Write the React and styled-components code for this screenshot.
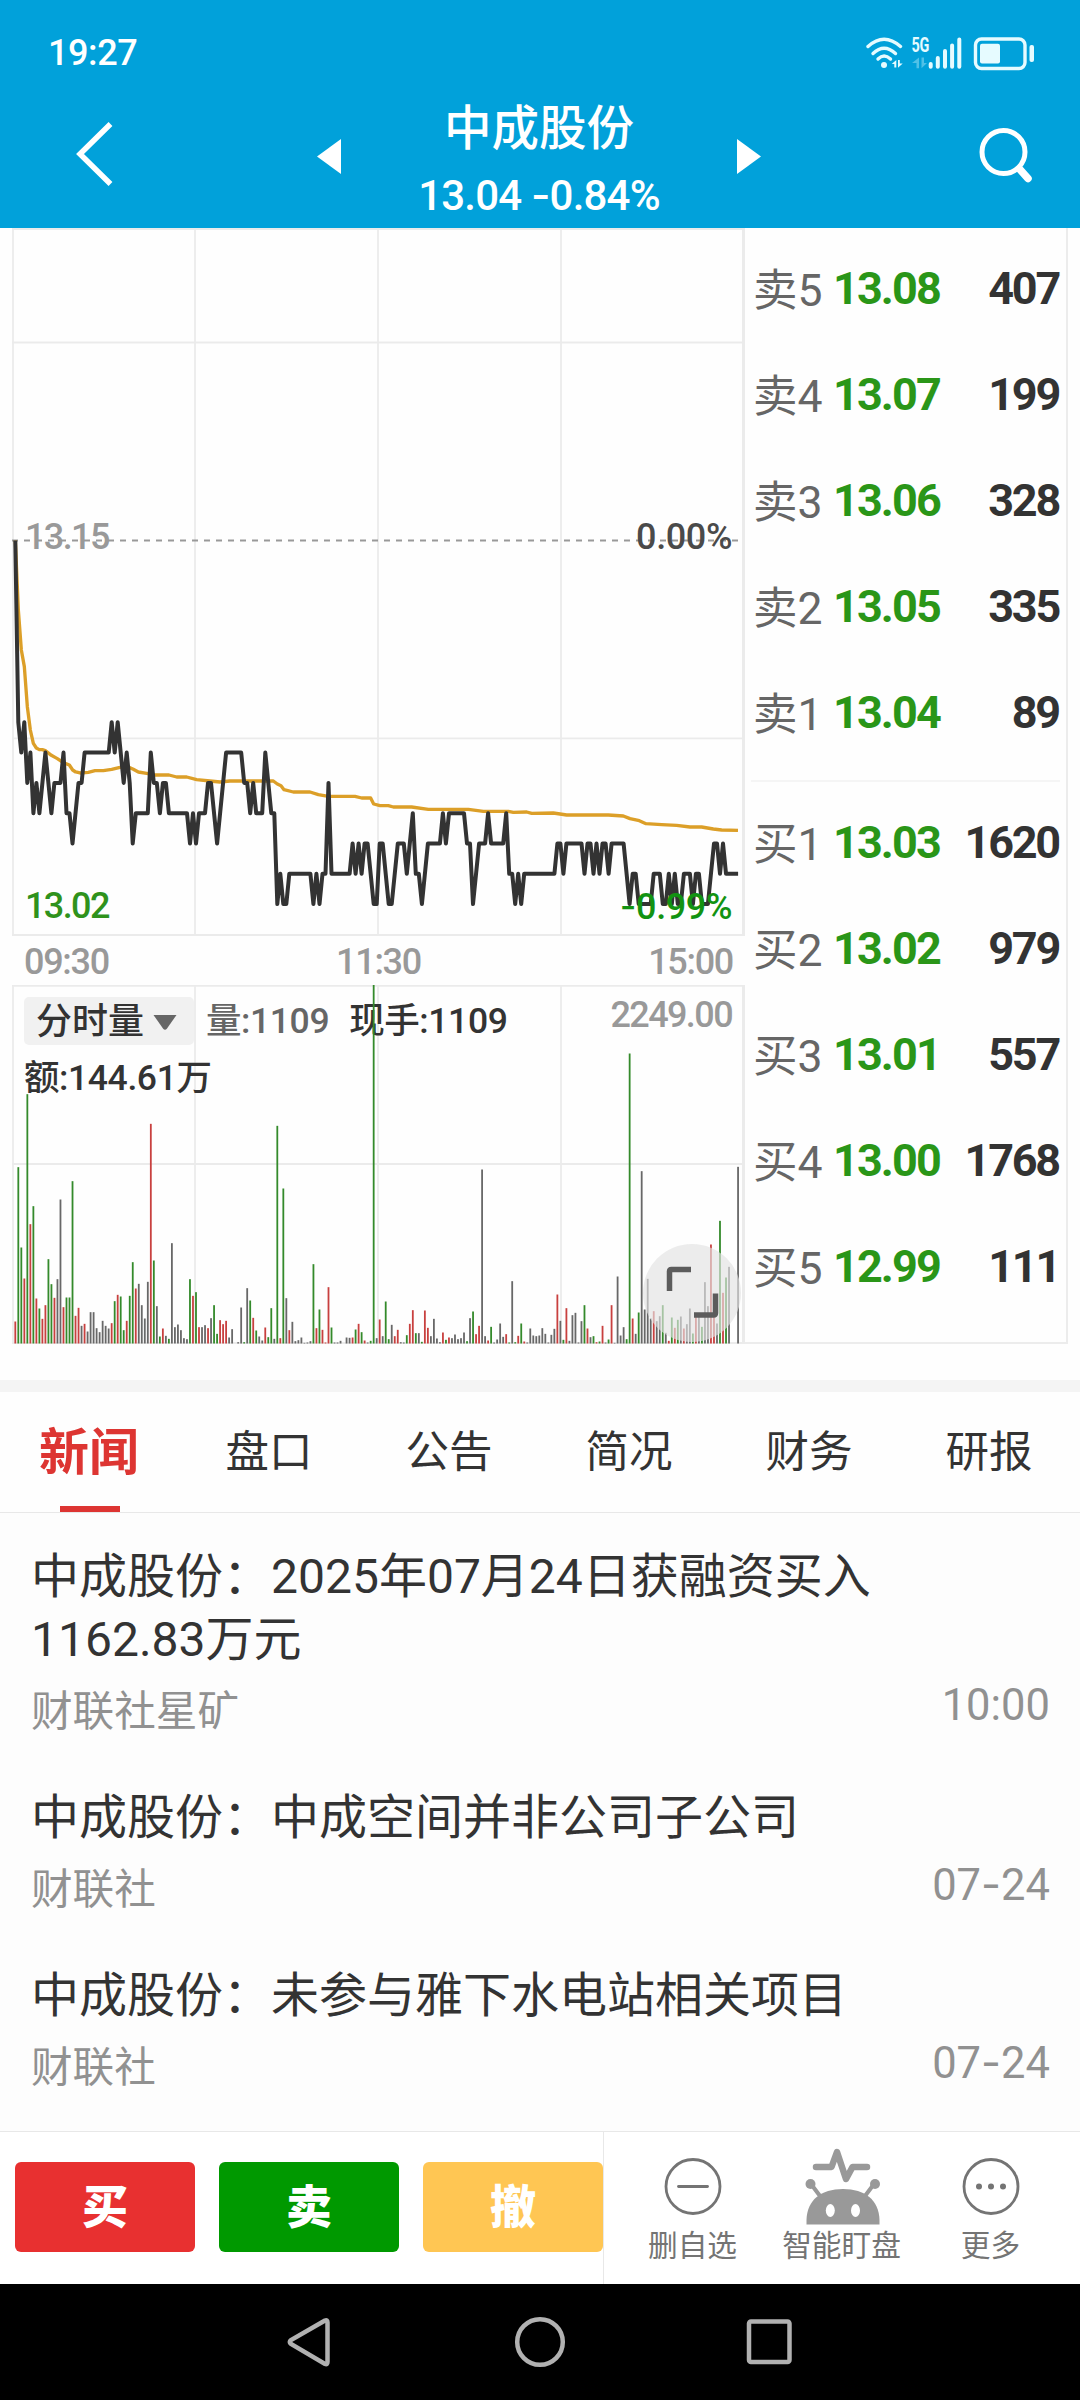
import React, { useState } from 'react';
import styled, { createGlobalStyle } from 'styled-components';

const GlobalStyle = createGlobalStyle`
  * {
    box-sizing: border-box;
  }
  body {
    margin: 0;
    background: #fefefe;
    color: #333;
    font-family: Roboto, 'Noto Sans CJK SC', sans-serif;
  }
  svg {
    display: block;
    flex: none;
  }
`;

const Screen = styled.div`
  display: flex;
  flex-direction: column;
  width: 1080px;
  height: 2400px;
  overflow: hidden;
`;

/* header */
const Header = styled.header`
  height: 228px;
  background: #01a1da;
  color: #fff;
`;

const StatusBar = styled.div`
  display: flex;
  align-items: center;
  justify-content: space-between;
  height: 94px;
  padding: 11px 40px 0 48px;
  font-size: 36px;
  font-weight: 500;
  letter-spacing: -0.4px;
`;

const TitleBar = styled.div`
  display: grid;
  grid-template-columns: 317px 444px 319px;
  align-items: center;
  height: 134px;
`;

const HeaderSide = styled.div`
  display: flex;
  justify-content: ${props => (props.$end ? 'flex-end' : 'flex-start')};
  padding: 0 47px 13px 75px;
`;

const Switcher = styled.div`
  display: flex;
  align-items: center;
  justify-content: space-between;
`;

const StockName = styled.div`
  text-align: center;
  h1 {
    margin: 0;
    padding-top: 1px;
    font-size: 47.5px;
    font-weight: 500;
    line-height: 66px;
  }
  p {
    margin: 0;
    font-size: 42px;
    font-weight: 500;
    line-height: 65px;
    letter-spacing: -0.8px;
  }
`;

/* chart + order book */
const Quote = styled.section`
  display: flex;
  height: 1116px;
`;

const Charts = styled.div`
  width: 745px;
`;

const ChartBox = styled.div`
  position: relative;
  height: ${props => props.$height}px;
`;

const ChartLabel = styled.span`
  position: absolute;
  top: ${props => props.$top}px;
  ${props => (props.$right ? 'right: 13px;' : 'left: 25px;')}
  color: ${props => props.$color};
  font-size: 36px;
  font-weight: 500;
  line-height: 42px;
  letter-spacing: ${props => (props.$percent ? -0.4 : -1.6)}px;
`;

const TimeAxis = styled.div`
  display: flex;
  align-items: center;
  justify-content: space-between;
  height: 47px;
  padding: 0 12px 0 24px;
  color: #999;
  font-size: 36px;
  font-weight: 500;
  letter-spacing: -1.3px;
`;

const Legend = styled.div`
  position: absolute;
  top: 11px;
  left: 24px;
  display: flex;
  flex-wrap: wrap;
  align-items: center;
  width: 520px;
  font-size: 35.5px;
  font-weight: 500;
  line-height: 50px;
  letter-spacing: -0.4px;
`;

const TypeSelect = styled.button`
  display: flex;
  align-items: center;
  justify-content: space-between;
  width: 170px;
  height: 48px;
  padding: 2px 16px 0 12px;
  border: 0;
  border-radius: 5px;
  background: #f1f1f1;
  color: #333;
  font: inherit;
  font-size: 36px;
`;

const LegendItem = styled.span`
  margin-left: ${props => props.$gap || 0}px;
  margin-top: ${props => props.$drop || 0}px;
  color: ${props => props.$color || '#333'};
`;

const ExpandButton = styled.button`
  position: absolute;
  right: 4px;
  bottom: 2px;
  width: 98px;
  height: 98px;
  padding: 0;
  border: 0;
  border-radius: 50%;
  background: rgba(226, 226, 226, 0.66);
`;

const BarLayer = styled.svg`
  position: absolute;
  top: 0;
  left: 0;
  pointer-events: none;
`;

const OrderBook = styled.div`
  width: 323px;
  padding: 7px 6px 0;
  border: solid #ececec;
  border-width: 0 2px 2px 0;
`;

const BookDivider = styled.div`
  height: 2px;
  margin: 15px 0 7px;
  background: #f5f5f5;
`;

const BookRow = styled.div`
  display: flex;
  align-items: center;
  height: 106px;
  padding: 0 1px 0 2px;
  font-size: 45px;
  font-weight: 700;
`;

const BookLabel = styled.span`
  width: 80px;
  padding-bottom: 4px;
  color: #666;
  font-size: 44.5px;
  font-weight: 400;
`;

const BookPrice = styled.span`
  color: #2a9618;
  letter-spacing: -1.9px;
`;

const BookVolume = styled.span`
  margin-left: auto;
  letter-spacing: -2.2px;
`;

/* news */
const Tabs = styled.nav`
  display: flex;
  height: 133px;
  margin-top: 36px;
  border-top: 12px solid #f4f4f4;
  border-bottom: 1px solid #e8e8e8;
`;

const Tab = styled.button`
  position: relative;
  width: 180px;
  padding: 2px 2px 0 0;
  border: 0;
  background: none;
  font-family: inherit;
  font-size: ${props => (props.$active ? 50 : 43.5)}px;
  font-weight: ${props => (props.$active ? 700 : 400)};
  line-height: 118px;
  color: ${props => (props.$active ? '#dd3532' : '#333')};
  &::after {
    content: '';
    position: absolute;
    left: 60px;
    bottom: 0;
    width: 60px;
    height: 6px;
    background: ${props => (props.$active ? '#dd3532' : 'none')};
  }
`;

const NewsList = styled.div`
  flex: 1;
  overflow: hidden;
  padding-top: 2px;
  background: #fdfdfd;
`;

const NewsItem = styled.article`
  padding: 30px 30px 13px 31px;
  h3 {
    width: 900px;
    margin: 0 0 10px;
    font-size: 48px;
    font-weight: 400;
    line-height: 63px;
  }
`;

const NewsMeta = styled.div`
  display: flex;
  justify-content: space-between;
  height: 62px;
  color: #919191;
  font-size: 41.6px;
  line-height: 62px;
  time {
    font-size: 43.5px;
    line-height: 50px;
  }
`;

/* Inter has the long hyphen that prices and dates are set with */
const Hyphen = styled.span`
  font-family: Inter, sans-serif;
`;

/* bottom */
const ActionBar = styled.footer`
  display: flex;
  height: 153px;
  border-top: 1px solid #e8e8e8;
  background: #fff;
`;

const TradeButtons = styled.div`
  display: flex;
  gap: 24px;
  width: 604px;
  padding: 30px 0 0 15px;
  border-right: 1px solid #e8e8e8;
`;

const TradeButton = styled.button`
  flex: none;
  width: 180px;
  height: 90px;
  padding: 0;
  border: 0;
  border-radius: 6px;
  background: ${props => props.$bg};
  color: #fff;
  font-family: inherit;
  font-size: 46px;
  font-weight: 900;
  line-height: 90px;
`;

const Tools = styled.div`
  display: flex;
  padding-left: 14px;
`;

const Tool = styled.div`
  display: flex;
  flex-direction: column;
  align-items: center;
  gap: 1px;
  width: 149px;
  padding-top: 15px;
  color: #747474;
  font-size: 29.7px;
  line-height: 40px;
`;

const SystemNav = styled.div`
  height: 116px;
  background: #000;
`;

const sells = [
  ['卖5', '13.08', 407],
  ['卖4', '13.07', 199],
  ['卖3', '13.06', 328],
  ['卖2', '13.05', 335],
  ['卖1', '13.04', 89],
];

const buys = [
  ['买1', '13.03', 1620],
  ['买2', '13.02', 979],
  ['买3', '13.01', 557],
  ['买4', '13.00', 1768],
  ['买5', '12.99', 111],
];

const tabs = ['新闻', '盘口', '公告', '简况', '财务', '研报'];

const news = [
  {
    title: '中成股份：2025年07月24日获融资买入1162.83万元',
    source: '财联社星矿',
    time: '10:00',
  },
  { title: '中成股份：中成空间并非公司子公司', source: '财联社', time: '07-24' },
  { title: '中成股份：未参与雅下水电站相关项目', source: '财联社', time: '07-24' },
];

// minute:ticks below the previous close (one tick = 0.01)
const priceData = `0:0 1:6 2:7 3:6 4:8 5:7 6:9 7:8 8:9 10:7 12:9 13:8 15:8 16:7 17:9 18:9 19:10
21:8 22:8 23:7 31:7 32:6 33:7 34:6 36:8 37:7 38:8 39:10 40:9 44:9 45:7 46:8 47:8 48:9 49:8 50:8
51:9 57:9 58:10 59:9 60:10 61:9 63:9 64:8 65:8 67:10 70:7 75:7 76:8 77:8 78:9 79:8 80:9 82:9 83:7
85:9 86:9 87:12 88:11 89:12 90:12 91:11 98:11 99:12 100:11 101:12 102:11 103:11 104:8 105:11
111:11 112:10 113:11 114:10 115:11 116:10 117:10 119:12 120:12 121:10 122:10 124:12 125:12 127:10
129:10 130:11 132:9 133:11 134:11 135:12 137:10 141:10 142:9 143:10 144:9 149:9 150:10 151:10
152:12 154:10 156:10 157:9 158:10 162:10 163:9 164:11 165:11 166:12 167:11 168:12 169:11 179:11
180:10 181:10 182:11 183:10 188:10 189:11 190:10 191:10 192:11 193:10 194:11 195:10 196:10 197:11
198:10 202:10 204:12 205:11 206:11 207:12 211:12 212:11 214:11 215:12 216:12 217:11 218:12 219:11
220:12 221:12 222:11 224:11 225:12 226:11 227:11 228:12 230:12 232:10 233:10 234:11 235:10 236:11
240:11`;

const averageLine = `46,122 55,330 64,450 73,500 82,620 91,690 100,730 109,744 118,749 127,749
136,752 154,766 172,776 190,788 208,795 218,810 227,816 240,819 265,817 285,812 310,812 335,808
360,802 385,801 400,808 415,816 440,820 465,825 507,825 530,831 560,831 590,839 630,843 660,846
690,843 820,843 832,852 843,857 852,869 880,876 930,876 955,884 985,889 1065,889 1085,894 1112,894
1121,912 1140,917 1165,917 1180,921 1235,921 1285,928 1405,928 1450,934 1525,934 1540,937 1580,936
1595,940 1660,939 1700,945 1825,945 1870,948 1890,956 1918,962 1938,971 1985,974 2030,976 2070,981
2105,981 2140,987 2165,990 2214,991`;

// one bar per minute: colour key + top edge, measured on a 1120 high scale
const volumeData = `r1054 g591 g832 r925 g372 r762 g708 r985 g1015 r1046 r1005 g867 g942 r983 k927
k688 r1011 g982 g982 g633 r1037 r1013 k1067 r1061 k1084 k1026 k1026 k1074 k1086 k1052 k1067 k1075
r1059 g993 r974 g979 g1080 r1052 g977 g876 r955 k941 k1005 k1045 k935 r461 g871 k1008 g1099 r1075
k1097 g1106 k819 k1071 k1063 k1080 k1104 k1107 g927 r977 g966 r1071 k1071 k1065 r1074 k1044 g1005
g1091 r1050 r1062 r1052 k1102 k1077 k1120 k1116 k1012 g1116 k954 g991 r1043 g1081 k1099 k1111
r1072 g1101 g1014 k1106 g467 r1104 g655 k984 r1080 k1055 k1113 k1110 k1102 k1118 k1117 k1113 g882
r1074 g1018 r1079 r1117 r951 g1072 k1117 k1117 k1112 k1120 k1102 k1103 r1102 g1078 r1061 g1086
r1111 k1117 g1112 g42 k1104 r1048 k1098 g994 g1107 k1064 r1098 r1079 k1116 k1117 g1095 r1061 r1020
g1089 k1089 g1115 r1021 r1073 k1098 k1046 k1105 k1116 r1087 g1109 r1102 k1104 k1093 k1107 k1104
k1087 g1113 k1044 g1024 r1092 r1067 k598 k1098 r1111 g1070 k1117 k1108 k1060 k1100 r1092 g1117
k933 g1116 r1097 g1060 r1114 k1117 k1075 k1096 k1098 k1096 k1074 k1091 k1117 k1094 k1076 r973
k1052 g1109 r1014 k1112 k1035 k1028 k1117 k1053 g1005 r1075 k1101 g1098 r1116 g1114 r1067 k1117
g1108 r1005 k1118 k919 k1096 k1071 g1107 g250 r1045 k1091 g1027 k603 k1018 k926 k1045 r1023 k1053
k1038 g1005 k1088 r1112 g1042 r1073 g1049 k1039 r1075 k1062 k1015 g1090 r1040 k1035 g1070 k936
k1008 r823 r1040 k1060 g752 r968 g922 k890 k1120 k1120 k590`;

const barColors = { r: '#c8403f', g: '#348a2b', k: '#686868' };

const minuteX = minute => 15.3 + minute * 3.0115;

const pricePoints = priceData
  .split(/\s+/)
  .map(item => {
    const [minute, ticks] = item.split(':').map(Number);
    return `${minuteX(minute).toFixed(1)},${(312.5 + ticks * 30.3).toFixed(1)}`;
  })
  .join(' ');

const bars = volumeData.split(/\s+/).map((item, minute) => ({
  x: minuteX(minute),
  height: (1120 - Number(item.slice(1))) / 3,
  color: barColors[item[0]],
}));

function Figures({ children }) {
  const [before, after] = children.split('-');
  if (after === undefined) return before;
  return (
    <>
      {before}
      <Hyphen>-</Hyphen>
      {after}
    </>
  );
}

function Grid({ rows, height }) {
  return (
    <g stroke="#ebebeb" strokeWidth="1.8">
      {[13, 195, 378, 561].map(x => (
        <path key={x} d={`M${x} 0V${height}`} />
      ))}
      <path d={`M743.5 0V${height}`} strokeWidth="3" />
      {rows.map(y => (
        <path key={y} d={`M12 ${y}H745`} />
      ))}
    </g>
  );
}

function PriceChart() {
  return (
    <ChartBox $height={710}>
      <svg width="745" height="710">
        <Grid rows={[1, 114.5, 510.3, 707]} height={708} />
        <path d="M12 312.5H738" stroke="#999" strokeWidth="1.8" strokeDasharray="6 6" />
        <g transform="translate(0 272) scale(0.33333)">
          <polyline
            points={averageLine}
            fill="none"
            stroke="#dc9f28"
            strokeWidth="10"
            strokeLinejoin="round"
          />
        </g>
        <polyline
          points={pricePoints}
          fill="none"
          stroke="#333"
          strokeWidth="4"
          strokeLinejoin="round"
        />
      </svg>
      <ChartLabel $top={288} $color="#999">13.15</ChartLabel>
      <ChartLabel $top={288} $color="#4a4a4a" $right $percent>0.00%</ChartLabel>
      <ChartLabel $top={657} $color="#2f921c">13.02</ChartLabel>
      <ChartLabel $top={657} $color="#129312" $right $percent>
        <Figures>-0.99%</Figures>
      </ChartLabel>
    </ChartBox>
  );
}

function VolumeChart() {
  return (
    <ChartBox $height={359}>
      <svg width="745" height="359">
        <Grid rows={[0.8, 179, 358]} height={359} />
      </svg>
      <Legend>
        <TypeSelect>
          分时量
          <svg width="26" height="17">
            <path d="M1.5 1h23L15 14.5q-2 2.5-4 0z" fill="#666" />
          </svg>
        </TypeSelect>
        <LegendItem $gap={12} $color="#666">量:1109</LegendItem>
        <LegendItem $gap={20}>现手:1109</LegendItem>
        <LegendItem $drop={7}>额:144.61万</LegendItem>
      </Legend>
      <ChartLabel $top={9} $color="#999" $right>2249.00</ChartLabel>
      <BarLayer width="745" height="359">
        {bars.map(({ x, height, color }) => (
          <rect key={x} x={x - 0.9} y={358.5 - height} width="1.8" height={height} fill={color} />
        ))}
      </BarLayer>
      <ExpandButton>
        <svg width="98" height="98" fill="none" stroke="#5c5c5c" strokeWidth="5.5">
          <path d="M26.5 47V27.5q0-2 2-2H48M51 71h19.5q2 0 2-2V49.5" />
        </svg>
      </ExpandButton>
    </ChartBox>
  );
}

function BookSide({ rows }) {
  return rows.map(([label, price, volume]) => (
    <BookRow key={label}>
      <BookLabel>{label}</BookLabel>
      <BookPrice>{price}</BookPrice>
      <BookVolume>{volume}</BookVolume>
    </BookRow>
  ));
}

function StatusIcons() {
  return (
    <svg width="180" height="44" fill="#e6fbff">
      <g fill="none" stroke="#e6fbff" strokeWidth="3.4" strokeLinecap="round">
        <path d="M8 15.5Q24 1 40.5 15.5" />
        <path d="M13 22.500Q24 12 35.5 22.5" />
        <path d="M18 28Q24 22 30.5 28" />
      </g>
      <circle cx="24" cy="34" r="3" />
      <path d="M36.3 29v7.5h-2V33h-2.6zM38 29h1.8v3.5h2.9L38 36.8z" />
      <text
        x="51.5"
        y="20.5"
        fontFamily="Roboto, sans-serif"
        fontSize="19.5"
        fontWeight="700"
        textLength="17.5"
        lengthAdjust="spacingAndGlyphs"
      >
        5G
      </text>
      <path
        d="M59 26.5v10.8h-2.5V32H52zM61.5 26.5H64V32h3l-5.5 5.3z"
        opacity="0.35"
      />
      <g stroke="#e6fbff" strokeWidth="4" strokeLinecap="round">
        <path d="M70.7 33v2.7M77.8 27v8.7M85 20v15.7M92.1 14.5v21.2M99.3 8.5v27.2" />
      </g>
      <rect
        x="115.5"
        y="8"
        width="49.5"
        height="29.5"
        rx="6"
        fill="none"
        stroke="#e6fbff"
        strokeWidth="3.4"
      />
      <rect x="120" y="12.7" width="20" height="19.8" rx="2" />
      <rect x="169.5" y="14" width="4.5" height="17" rx="2" />
    </svg>
  );
}

function RobotIcon() {
  return (
    <svg width="78" height="78" fill="none" stroke="#999" strokeLinecap="round">
      <path
        d="M13 20h15.500L34 5l9 27 6.5-12H64"
        strokeWidth="6.5"
        strokeLinejoin="round"
      />
      <path d="M8 37l9 12M71 37l-9 12" strokeWidth="4" />
      <circle cx="7.5" cy="37" r="5" fill="#999" stroke="none" />
      <circle cx="72" cy="37" r="5" fill="#999" stroke="none" />
      <path
        d="M3.500 77.500V73C4 53 18 42 40 42s36 11 36.500 31v4.500z"
        fill="#999"
        stroke="none"
      />
      <ellipse cx="27.3" cy="63.5" rx="4.5" ry="6.5" fill="#fff" stroke="none" />
      <ellipse cx="52.5" cy="63.5" rx="4.5" ry="6.5" fill="#fff" stroke="none" />
    </svg>
  );
}

function App() {
  const [activeTab, setActiveTab] = useState('新闻');

  return (
    <Screen>
      <GlobalStyle />
      <Header>
        <StatusBar>
          <span>19:27</span>
          <StatusIcons />
        </StatusBar>
        <TitleBar>
          <HeaderSide>
            <svg width="40" height="66" fill="none" stroke="#fff" strokeWidth="5.5">
              <path d="M35.5 2L5 32l30.5 30" />
            </svg>
          </HeaderSide>
          <Switcher>
            <svg width="24" height="44">
              <path d="M24 0v35L0 17.5z" fill="#fff" />
            </svg>
            <StockName>
              <h1>中成股份</h1>
              <p>
                <Figures>13.04 -0.84%</Figures>
              </p>
            </StockName>
            <svg width="24" height="44">
              <path d="M0 0v35l24-17.5z" fill="#fff" />
            </svg>
          </Switcher>
          <HeaderSide $end>
            <svg width="54" height="56" fill="none" stroke="#fff" strokeLinecap="round">
              <circle cx="24.5" cy="25" r="21.500" strokeWidth="5" />
              <path d="M41 42.5l8 9" strokeWidth="7.5" />
            </svg>
          </HeaderSide>
        </TitleBar>
      </Header>

      <Quote>
        <Charts>
          <PriceChart />
          <TimeAxis>
            <span>09:30</span>
            <span>11:30</span>
            <span>15:00</span>
          </TimeAxis>
          <VolumeChart />
        </Charts>
        <OrderBook>
          <BookSide rows={sells} />
          <BookDivider />
          <BookSide rows={buys} />
        </OrderBook>
      </Quote>

      <Tabs>
        {tabs.map(tab => (
          <Tab key={tab} $active={tab === activeTab} onClick={() => setActiveTab(tab)}>
            {tab}
          </Tab>
        ))}
      </Tabs>
      <NewsList>
        {news.map(({ title, source, time }) => (
          <NewsItem key={title}>
            <h3>{title}</h3>
            <NewsMeta>
              <span>{source}</span>
              <time>
                <Figures>{time}</Figures>
              </time>
            </NewsMeta>
          </NewsItem>
        ))}
      </NewsList>

      <ActionBar>
        <TradeButtons>
          <TradeButton $bg="#e83030">买</TradeButton>
          <TradeButton $bg="#009900">卖</TradeButton>
          <TradeButton $bg="#ffc653">撤</TradeButton>
        </TradeButtons>
        <Tools>
          <Tool>
            <svg width="78" height="78" fill="none" stroke="#747474" strokeWidth="2.8">
              <circle cx="39" cy="39.5" r="27" />
              <path d="M24.5 39.5h29" strokeLinecap="round" />
            </svg>
            删自选
          </Tool>
          <Tool>
            <RobotIcon />
            智能盯盘
          </Tool>
          <Tool>
            <svg width="78" height="78" fill="#747474">
              <circle cx="39" cy="39.5" r="27" fill="none" stroke="#747474" strokeWidth="2.8" />
              <circle cx="27" cy="39.5" r="3" />
              <circle cx="39" cy="39.5" r="3" />
              <circle cx="51" cy="39.5" r="3" />
            </svg>
            更多
          </Tool>
        </Tools>
      </ActionBar>

      <SystemNav>
        <svg width="1080" height="116" fill="none" stroke="#b1b1b1" strokeWidth="4.5">
          <path d="M325 36.5L291 56q-2.500 2 0 4l34 20q2.500 1 2.500-2V38.500q0-3-2.500-2z" />
          <circle cx="540" cy="58" r="22.8" />
          <rect x="749" y="37.5" width="40.5" height="40.5" rx="2" />
        </svg>
      </SystemNav>
    </Screen>
  );
}

export default App;
